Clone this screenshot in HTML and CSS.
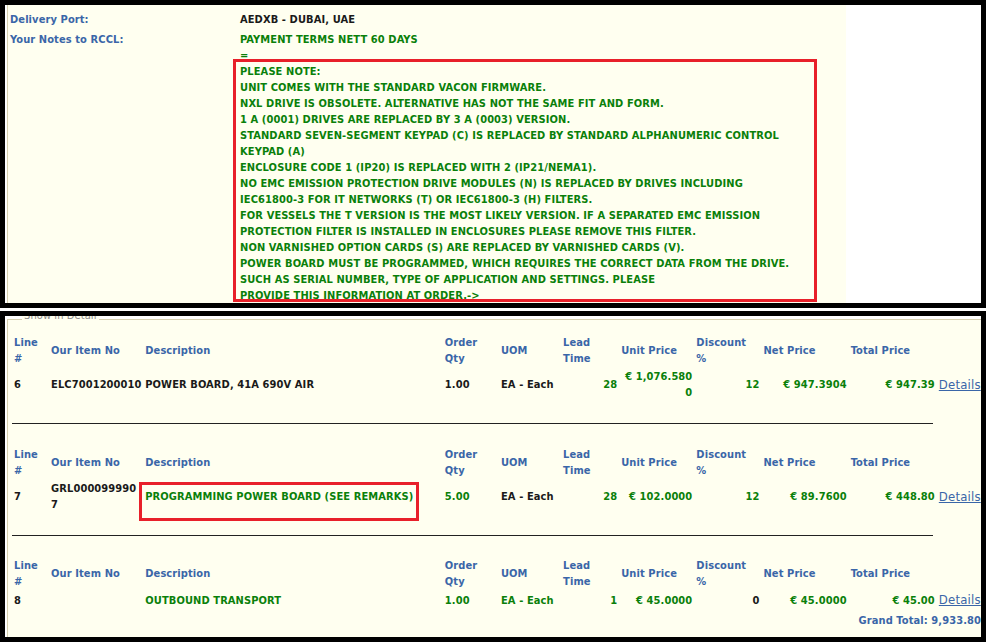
FILE: index.html
```html
<!DOCTYPE html>
<html>
<head>
<meta charset="utf-8">
<title>Order Details</title>
<link rel="stylesheet" href="styles.css">
</head>
<body>
<section class="frame frame-top">
  <div class="panel">
    <div class="info">
      <div class="label">Delivery Port:</div>
      <div class="val dark">AEDXB - DUBAI, UAE</div>
      <div class="label">Your Notes to RCCL:</div>
      <div class="val green notes">PAYMENT TERMS NETT 60 DAYS<br>=<br>PLEASE NOTE:<br>UNIT COMES WITH THE STANDARD VACON FIRMWARE.<br>NXL DRIVE IS OBSOLETE. ALTERNATIVE HAS NOT THE SAME FIT AND FORM.<br>1 A (0001) DRIVES ARE REPLACED BY 3 A (0003) VERSION.<br>STANDARD SEVEN-SEGMENT KEYPAD (C) IS REPLACED BY STANDARD ALPHANUMERIC CONTROL<br>KEYPAD (A)<br>ENCLOSURE CODE 1 (IP20) IS REPLACED WITH 2 (IP21/NEMA1).<br>NO EMC EMISSION PROTECTION DRIVE MODULES (N) IS REPLACED BY DRIVES INCLUDING<br>IEC61800-3 FOR IT NETWORKS (T) OR IEC61800-3 (H) FILTERS.<br>FOR VESSELS THE T VERSION IS THE MOST LIKELY VERSION. IF A SEPARATED EMC EMISSION<br>PROTECTION FILTER IS INSTALLED IN ENCLOSURES PLEASE REMOVE THIS FILTER.<br>NON VARNISHED OPTION CARDS (S) ARE REPLACED BY VARNISHED CARDS (V).<br>POWER BOARD MUST BE PROGRAMMED, WHICH REQUIRES THE CORRECT DATA FROM THE DRIVE.<br>SUCH AS SERIAL NUMBER, TYPE OF APPLICATION AND SETTINGS. PLEASE<br>PROVIDE THIS INFORMATION AT ORDER.-&gt;<span class="mark mark-notes"></span></div>
    </div>
  </div>
</section>

<section class="frame frame-bottom">
  <div class="fs">
    <span class="legend">Show in Detail</span>

    <table class="lines">
      <colgroup><col class="c-line"><col class="c-item"><col class="c-desc"><col class="c-qty"><col class="c-uom"><col class="c-lead"><col class="c-unit"><col class="c-disc"><col class="c-net"><col class="c-total"><col class="c-det"></colgroup>
      <tr class="head"><th>Line<br>#</th><th>Our Item No</th><th>Description</th><th>Order<br>Qty</th><th>UOM</th><th>Lead<br>Time</th><th>Unit Price</th><th>Discount<br>%</th><th>Net Price</th><th>Total Price</th><th></th></tr>
      <tr class="data"><td class="dark">6</td><td class="dark">ELC7001200010</td><td class="dark">POWER BOARD, 41A 690V AIR</td><td class="dark">1.00</td><td class="dark">EA - Each</td><td class="num green">28</td><td class="num green">€ 1,076.580<br>0</td><td class="num green">12</td><td class="num green">€ 947.3904</td><td class="num green">€ 947.39</td><td class="det"><a href="#">Details</a></td></tr>
    </table>
    <hr class="sep sep-first">

    <table class="lines">
      <colgroup><col class="c-line"><col class="c-item"><col class="c-desc"><col class="c-qty"><col class="c-uom"><col class="c-lead"><col class="c-unit"><col class="c-disc"><col class="c-net"><col class="c-total"><col class="c-det"></colgroup>
      <tr class="head"><th>Line<br>#</th><th>Our Item No</th><th>Description</th><th>Order<br>Qty</th><th>UOM</th><th>Lead<br>Time</th><th>Unit Price</th><th>Discount<br>%</th><th>Net Price</th><th>Total Price</th><th></th></tr>
      <tr class="data"><td class="dark">7</td><td class="dark">GRL000099990<br>7</td><td class="green"><span class="rel">PROGRAMMING POWER BOARD (SEE REMARKS)<span class="mark mark-desc"></span></span></td><td class="green">5.00</td><td class="dark">EA - Each</td><td class="num green">28</td><td class="num green">€ 102.0000</td><td class="num green">12</td><td class="num green">€ 89.7600</td><td class="num green">€ 448.80</td><td class="det"><a href="#">Details</a></td></tr>
    </table>
    <hr class="sep">

    <table class="lines">
      <colgroup><col class="c-line"><col class="c-item"><col class="c-desc"><col class="c-qty"><col class="c-uom"><col class="c-lead"><col class="c-unit"><col class="c-disc"><col class="c-net"><col class="c-total"><col class="c-det"></colgroup>
      <tr class="head"><th>Line<br>#</th><th>Our Item No</th><th>Description</th><th>Order<br>Qty</th><th>UOM</th><th>Lead<br>Time</th><th>Unit Price</th><th>Discount<br>%</th><th>Net Price</th><th>Total Price</th><th></th></tr>
      <tr class="data"><td class="dark">8</td><td></td><td class="green">OUTBOUND TRANSPORT</td><td class="green">1.00</td><td class="green">EA - Each</td><td class="num green">1</td><td class="num green">€ 45.0000</td><td class="num dark">0</td><td class="num green">€ 45.0000</td><td class="num green">€ 45.00</td><td class="det"><a href="#">Details</a></td></tr>
      <tr class="total"><td colspan="11">Grand Total: 9,933.80</td></tr>
    </table>
  </div>
</section>
</body>
</html>
```
FILE: styles.css
```css
html, body {
  margin: 0;
  padding: 0;
  background: #ffffff;
}
body {
  width: 987px;
  height: 642px;
  overflow: hidden;
  font: bold 11px/16px "DejaVu Sans Condensed", "DejaVu Sans", sans-serif;
  letter-spacing: 0.1px;
  color: #1a1a1a;
}
.frame {
  box-sizing: border-box;
  width: 986px;
  border: 5px solid #000;
  overflow: hidden;
  background: #fff;
}
.frame-top {
  height: 308px;
  padding-left: 2px;
}
.panel {
  width: 839px;
  height: 100%;
  background: #fffff0;
  border-left: 1px solid #d6d0b0;
  padding: 7px 0 0 2px;
  box-sizing: border-box;
}
.info {
  display: grid;
  grid-template-columns: 230px 1fr;
  row-gap: 4px;
}
.label {
  color: #3a66a8;
}
.dark { color: #1a1a1a; }
.green { color: #0a800a; }
.notes {
  position: relative;
  white-space: nowrap;
}
.mark {
  position: absolute;
  box-sizing: border-box;
  border: 3px solid #e8202a;
  pointer-events: none;
}
.mark-notes {
  left: -7px;
  top: 27px;
  width: 584px;
  height: 243px;
}
.frame-bottom {
  margin-top: 3px;
  height: 331px;
  padding: 3px 0 0 2px;
}
.fs {
  position: relative;
  height: 100%;
  box-sizing: border-box;
  background: #fffff0;
  border-left: 1px solid #d6d0b0;
  border-top: 1px solid #d6d0b0;
  padding: 14px 0 0 4px;
}
.legend {
  position: absolute;
  left: 14px;
  top: -12px;
  font-weight: normal;
  color: #8a8a8a;
  background: #fffff0;
  padding: 0 2px;
}
.lines {
  table-layout: fixed;
  border-collapse: collapse;
  width: 971px;
}
.c-line { width: 37px; }
.c-item { width: 94px; }
.c-desc { width: 299px; }
.c-qty { width: 56px; }
.c-uom { width: 62px; }
.c-lead { width: 58px; }
.c-unit { width: 75px; }
.c-disc { width: 67px; }
.c-net { width: 87px; }
.c-total { width: 88px; }
.c-det { width: 46px; }
.lines th,
.lines td {
  padding: 1px 2px;
  vertical-align: middle;
  text-align: left;
  white-space: nowrap;
}
.lines th {
  color: #3a66a8;
}
.lines td.num {
  text-align: right;
}
.det a {
  font: normal 13px/16px "DejaVu Sans Condensed", "DejaVu Sans", sans-serif;
  letter-spacing: 0.2px;
  color: #3a66a8;
  text-decoration: underline;
}
.rel {
  position: relative;
  display: inline-block;
}
.mark-desc {
  left: -6px;
  top: -7px;
  width: 280px;
  height: 39px;
}
.sep {
  width: 921px;
  margin: 21px 0 21px 0;
  border: 0;
  border-top: 1px solid #222;
  height: 0;
}
.sep-first {
  margin-bottom: 22px;
}
.total td {
  padding-top: 3px;
  text-align: right;
  color: #3a66a8;
}
```
